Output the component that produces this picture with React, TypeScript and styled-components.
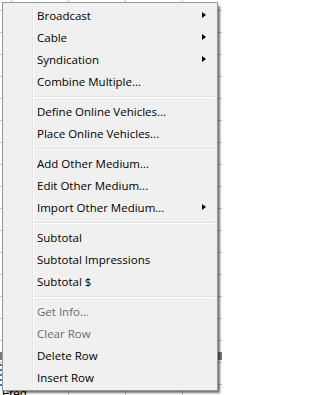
import React from 'react';
import styled, { createGlobalStyle } from 'styled-components';

const GlobalStyle = createGlobalStyle`
  html, body {
    margin: 0;
    padding: 0;
    background: #ffffff;
  }
  body {
    font-family: "Open Sans", "Noto Sans", "Liberation Sans", sans-serif;
  }
`;

const Sheet = styled.div`
  position: relative;
  width: 222px;
  height: 395px;
  overflow: hidden;
  background-color: #ffffff;
  background-image:
    linear-gradient(to right, #c8c8c8 1px, transparent 1px),
    linear-gradient(to bottom, #c8c8c8 1px, transparent 1px);
  background-size: 57px 100%, 100% 22px;
  background-position: 11px 0, 0 10px;
`;

const SheetBody = styled.div`
  display: flex;
  flex-direction: column;
  padding-top: 352px;
`;

const HeaderBand = styled.div`
  height: 8px;
  background: #7a7a7a;
`;

const BlueCells = styled.div`
  height: 24px;
  width: 3px;
  margin-top: 4px;
  background: repeating-linear-gradient(to bottom, #3a7bd5 0 2px, #ffffff 2px 5px);
`;

const FreqLabel = styled.div`
  font-family: "Liberation Sans", sans-serif;
  font-size: 12px;
  line-height: 12px;
  color: #000;
  padding-left: 2px;
`;

const Menu = styled.div`
  position: absolute;
  left: 2px;
  top: 2px;
  width: 216px;
  box-sizing: border-box;
  border: 1px solid #979797;
  background: #f0f0f0;
  padding: 1px 2px 2px 2px;
  box-shadow: 3px 3px 2px -1px rgba(0, 0, 0, 0.55);
  display: flex;
  flex-direction: column;
`;

const Gutter = styled.div`
  position: absolute;
  top: 1px;
  bottom: 1px;
  left: 29px;
  width: 1px;
  background: #e2e3e3;
  box-shadow: 1px 0 0 #ffffff;
`;

const Item = styled.div<{ $disabled?: boolean }>`
  position: relative;
  height: 22px;
  display: flex;
  align-items: center;
  padding-left: 32px;
  font-size: 11.5px;
  color: ${(p) => (p.$disabled ? '#6d6d6d' : '#000000')};
  white-space: nowrap;
`;

const Label = styled.span`
  flex: 1;
`;

const Arrow = styled.span`
  width: 0;
  height: 0;
  border-top: 3.5px solid transparent;
  border-bottom: 3.5px solid transparent;
  border-left: 4px solid #000000;
  margin-right: 9px;
`;

const Separator = styled.div`
  height: 8px;
  box-sizing: border-box;
  padding-top: 4px;
  margin-left: 29px;
  &::after {
    content: '';
    display: block;
    height: 1px;
    background: #e0e0e0;
    border-bottom: 1px solid #ffffff;
  }
`;

type Entry = { label: string; sub?: boolean; disabled?: boolean } | 'sep';

const entries: Entry[] = [
  { label: 'Broadcast', sub: true },
  { label: 'Cable', sub: true },
  { label: 'Syndication', sub: true },
  { label: 'Combine Multiple...' },
  'sep',
  { label: 'Define Online Vehicles...' },
  { label: 'Place Online Vehicles...' },
  'sep',
  { label: 'Add Other Medium...' },
  { label: 'Edit Other Medium...' },
  { label: 'Import Other Medium...', sub: true },
  'sep',
  { label: 'Subtotal' },
  { label: 'Subtotal Impressions' },
  { label: 'Subtotal $' },
  'sep',
  { label: 'Get Info...', disabled: true },
  { label: 'Clear Row', disabled: true },
  { label: 'Delete Row' },
  { label: 'Insert Row' },
];

export default function App() {
  return (
    <>
      <GlobalStyle />
      <Sheet>
        <SheetBody>
          <HeaderBand />
          <BlueCells />
          <FreqLabel>Freq</FreqLabel>
        </SheetBody>
        <Menu>
          <Gutter />
          {entries.map((e, i) =>
            e === 'sep' ? (
              <Separator key={i} />
            ) : (
              <Item key={i} $disabled={e.disabled}>
                <Label>{e.label}</Label>
                {e.sub && <Arrow />}
              </Item>
            ),
          )}
        </Menu>
      </Sheet>
    </>
  );
}
